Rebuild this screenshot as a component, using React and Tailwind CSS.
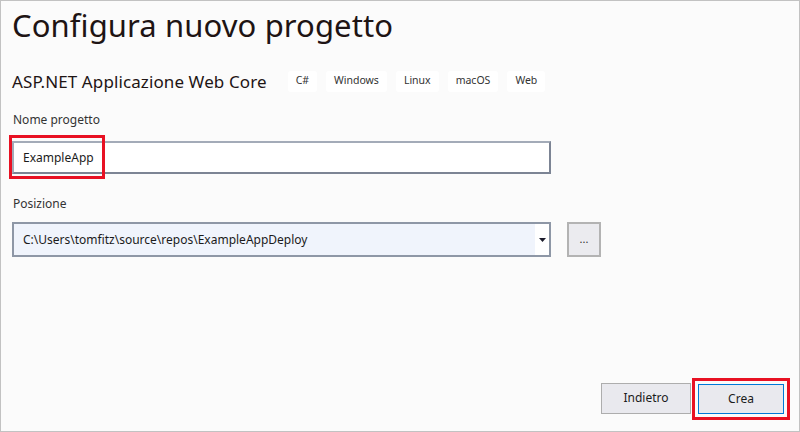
import { useState } from 'react';

const tags = ['C#', 'Windows', 'Linux', 'macOS', 'Web'];

export default function App() {
  const [name, setName] = useState('ExampleApp');

  return (
    <div className="w-[800px] h-[432px] bg-[#fbfbfb] border border-[#c2c2c2] flex flex-col font-['Noto_Sans','Open_Sans',sans-serif] text-[#1b1b1b] overflow-hidden">
      <div className="pl-[11px] pr-[11px] pt-[2px]">
        <h1 className="text-[31px] leading-[44px] text-[#1e1414] tracking-[0.1px]">Configura nuovo progetto</h1>

        <div className="flex items-center mt-[23px] h-[22px]">
          <span className="text-[17px] leading-none text-[#1e1414] mr-[21px] tracking-[0.1px]">ASP.NET Applicazione Web Core</span>
          <div className="flex items-center gap-[9px]">
            {tags.map((t) => (
              <span key={t} className="bg-white rounded-[3px] px-[8px] h-[21px] flex items-center text-[10.5px] text-[#333]">
                {t}
              </span>
            ))}
          </div>
        </div>

        {/* Nome progetto */}
        <div className="mt-[20px] text-[12px] leading-[16px] text-[#333] pl-[1px]">Nome progetto</div>
        <div className="relative mt-[13px] w-[539px]">
          <input
            value={name}
            onChange={(e) => setName(e.target.value)}
            className="w-full h-[33px] bg-white border-2 border-[#a3abb8] border-b-[#7c8494] border-r-[#7c8494] px-[9px] text-[12px] text-[#1b1b1b] outline-none"
          />
          <div className="absolute left-[-3px] top-[-6px] w-[96px] h-[44px] border-[3px] border-[#e81123] pointer-events-none" />
        </div>

        {/* Posizione */}
        <div className="mt-[22px] text-[12px] leading-[16px] text-[#333] pl-[1px]">Posizione</div>
        <div className="flex items-center mt-[10px]">
          <div className="w-[539px] h-[35px] flex border-2 border-[#8e97a6] bg-[#f0f4fc]">
            <div className="flex-1 flex items-center px-[9px] text-[12px] text-[#1b1b1b]">
              C:\Users\tomfitz\source\repos\ExampleAppDeploy
            </div>
            <div className="w-[14px] bg-white flex items-center justify-center">
              <svg width="7" height="4" viewBox="0 0 7 4"><path d="M0 0h7L3.5 4z" fill="#1b1b2b" /></svg>
            </div>
          </div>
          <button className="ml-[16px] w-[34px] h-[35px] bg-[#ebebef] border-2 border-[#b3b3b3] flex items-center justify-center text-[11px] text-[#333] leading-none pb-[2px]">
            ...
          </button>
        </div>
      </div>

      <div className="mt-auto flex justify-end items-center pr-[9px] pb-[11px] gap-[1px]">
        <button className="w-[90px] h-[31px] mb-[2px] bg-[#e9e9ee] border border-[#adadad] text-[12px] text-[#1b1b1b]">
          Indietro
        </button>
        <div className="border-[3px] border-[#e81123] p-[3px]">
          <button className="w-[86px] h-[30px] bg-[#e9e9ee] border border-[#0078d7] text-[12px] text-[#1b1b1b]">
            Crea
          </button>
        </div>
      </div>
    </div>
  );
}
